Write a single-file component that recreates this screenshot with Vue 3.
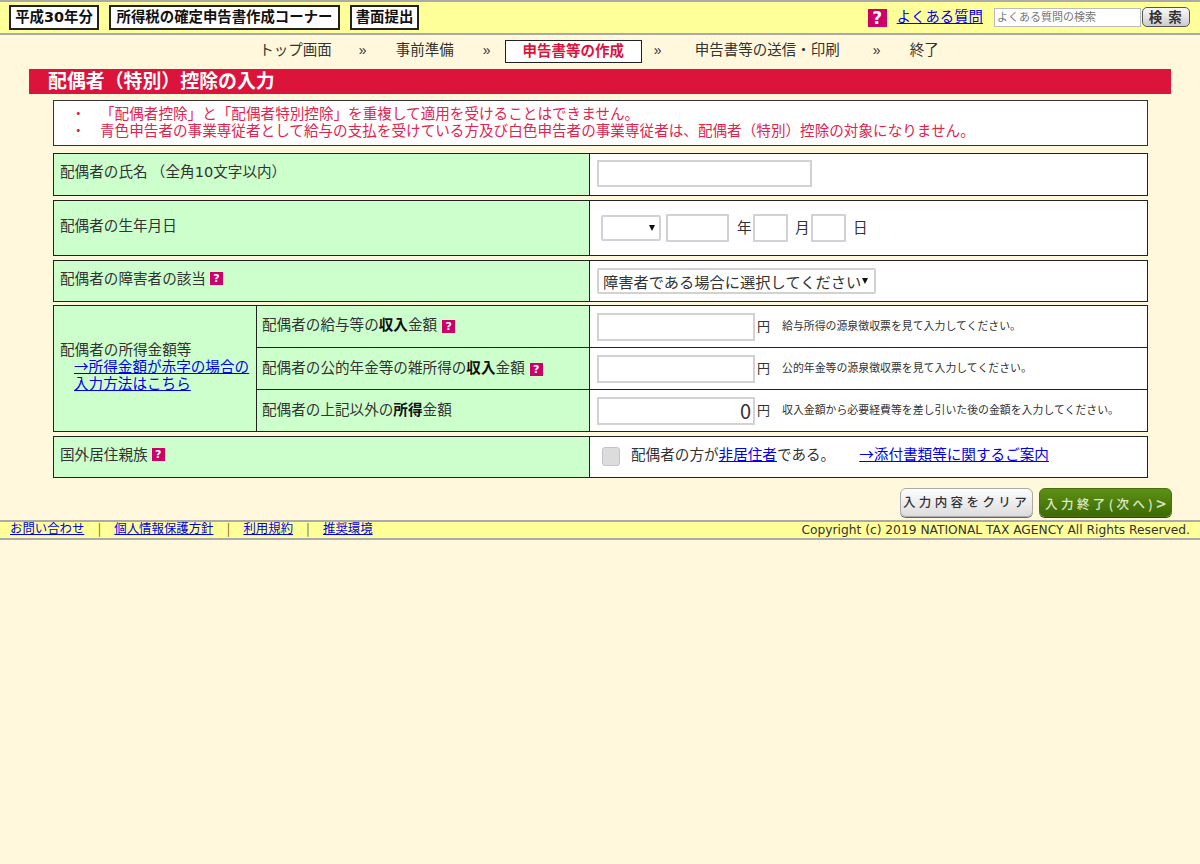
<script setup>
const noteLines = [
  '「配偶者控除」と「配偶者特別控除」を重複して適用を受けることはできません。',
  '青色申告者の事業専従者として給与の支払を受けている方及び白色申告者の事業専従者は、配偶者（特別）控除の対象になりません。'
]
const footerLinks = ['お問い合わせ', '個人情報保護方針', '利用規約', '推奨環境']
</script>

<template>
  <div class="page">
    <header class="top">
      <div class="tags">
        <span class="tag t1">平成<span class="num">30</span>年分</span>
        <span class="tag t2">所得税の確定申告書作成コーナー</span>
        <span class="tag t3">書面提出</span>
      </div>
      <div class="help">
        <span class="q q-big">?</span>
        <a class="faq" href="#">よくある質問</a>
        <input class="search" placeholder="よくある質問の検索" />
        <button class="search-btn">検 索</button>
      </div>
    </header>

    <nav class="steps">
      <span class="step s1">トップ画面</span>
      <span class="sep s2">»</span>
      <span class="step s3">事前準備</span>
      <span class="sep s4">»</span>
      <span class="step active">申告書等の作成</span>
      <span class="sep s5">»</span>
      <span class="step s6">申告書等の送信・印刷</span>
      <span class="sep s7">»</span>
      <span class="step s8">終了</span>
    </nav>

    <h1 class="title">配偶者（特別）控除の入力</h1>

    <main class="content">
      <ul class="notice">
        <li v-for="line in noteLines" :key="line"><span class="dot">・</span><span>{{ line }}</span></li>
      </ul>

      <section class="row h-name">
        <div class="label"><span>配偶者の氏名 （全角<span class="num">10</span>文字以内）</span></div>
        <div class="field"><input class="box name-input" /></div>
      </section>

      <section class="row h-birth">
        <div class="label">配偶者の生年月日</div>
        <div class="field birth">
          <div class="era"><span class="arrow"></span></div>
          <input class="box year" />
          <span class="unit u-year">年</span>
          <input class="box md" />
          <span class="unit u-month">月</span>
          <input class="box md" />
          <span class="unit u-day">日</span>
        </div>
      </section>

      <section class="row h-dis">
        <div class="label">配偶者の障害者の該当<span class="q q-small">?</span></div>
        <div class="field">
          <div class="dis-select">障害者である場合に選択してください<span class="arrow"></span></div>
        </div>
      </section>

      <section class="row income">
        <div class="income-head">
          <div>配偶者の所得金額等</div>
          <a href="#" class="red-link">→所得金額が赤字の場合の入力方法はこちら</a>
        </div>
        <div class="income-rows">
          <div class="irow">
            <div class="ilabel first">配偶者の給与等の<b>収入</b>金額<span class="q q-small">?</span></div>
            <div class="ifield">
              <input class="box money" /><span class="yen">円</span>
              <span class="hint">給与所得の源泉徴収票を見て入力してください。</span>
            </div>
          </div>
          <div class="irow">
            <div class="ilabel">配偶者の公的年金等の雑所得の<b>収入</b>金額<span class="q q-small">?</span></div>
            <div class="ifield">
              <input class="box money" /><span class="yen">円</span>
              <span class="hint">公的年金等の源泉徴収票を見て入力してください。</span>
            </div>
          </div>
          <div class="irow">
            <div class="ilabel">配偶者の上記以外の<b>所得</b>金額</div>
            <div class="ifield">
              <input class="box money" value="0" /><span class="yen">円</span>
              <span class="hint">収入金額から必要経費等を差し引いた後の金額を入力してください。</span>
            </div>
          </div>
        </div>
      </section>

      <section class="row h-dis">
        <div class="label">国外居住親族<span class="q q-small">?</span></div>
        <div class="field abroad">
          <span class="check"></span>
          <span>配偶者の方が<a href="#">非居住者</a>である。</span>
          <a href="#" class="doc-link">→添付書類等に関するご案内</a>
        </div>
      </section>
    </main>

    <div class="actions">
      <button class="act clear">入力内容をクリア</button>
      <button class="act next">入力終了(次へ)<span class="gt">&gt;</span></button>
    </div>

    <footer class="foot">
      <div class="foot-links">
        <template v-for="(l, i) in footerLinks" :key="l">
          <a href="#">{{ l }}</a>
          <span v-if="i < footerLinks.length - 1" class="bar">|</span>
        </template>
      </div>
      <div class="copy">Copyright (c) 2019 NATIONAL TAX AGENCY All Rights Reserved.</div>
    </footer>
  </div>
</template>

<style>
html, body { margin: 0; background: #fff8dc; }
</style>

<style scoped>
* { box-sizing: border-box; }
.page {
  min-height: 864px;
  background: #fff8dc;
  color: #333;
  font-family: "Noto Sans CJK JP", "DejaVu Sans", sans-serif;
  font-size: 14.6px;
  line-height: 17px;
}
a { color: #0000ee; }
.num { font-family: "DejaVu Sans", sans-serif; }

.top {
  height: 35px;
  background: #ffff99;
  border-top: 2px solid #aaa;
  border-bottom: 2px solid #aaa;
  display: flex;
  justify-content: space-between;
  padding: 3px 10px 0 9px;
}
.tags { display: flex; gap: 10px; }
.tag {
  height: 25px;
  background: #fff;
  border: 2px solid #222;
  text-align: center;
  font-weight: 700;
  font-size: 14.4px;
  line-height: 17px;
  color: #111;
  white-space: nowrap;
}
.t1 { width: 90px; }
.t2 { width: 231px; }
.t3 { width: 69px; }
.help { display: flex; align-items: flex-start; padding-top: 4px; }
.q {
  display: inline-block;
  background: #cc0066;
  color: #fff;
  font-weight: 700;
  text-align: center;
  font-family: "DejaVu Sans", sans-serif;
}
.q-big { width: 19px; height: 18px; font-size: 17px; line-height: 18px; }
.q-small { width: 13px; height: 13px; font-size: 11px; line-height: 13px; margin-left: 4px; vertical-align: 0; }
.ilabel .q-small { margin-left: 5px; }
.label .q-small { margin-top: 2px; }
.faq { margin-left: 10px; margin-right: 11px; font-size: 14.4px; line-height: 14px; }
.search {
  width: 147px;
  height: 19px;
  margin-top: -1px;
  border: 1px solid #bbb;
  background: #fff;
  padding: 0 2px 3px;
  font: 11px "Noto Sans CJK JP", sans-serif;
}
.search::placeholder { color: #777; }
.search-btn {
  width: 48px;
  height: 20px;
  margin-top: -2px;
  margin-left: 1px;
  padding: 0 0 2px;
  border: 1px solid #555;
  border-radius: 5px;
  background: linear-gradient(#fafafa, #ccc);
  font: 700 13.5px/14px "Noto Sans CJK JP", sans-serif;
  letter-spacing: 1.5px;
  color: #333;
}

.steps {
  height: 34px;
  display: flex;
  justify-content: center;
  align-items: flex-start;
  padding: 5px 2px 0 0;
  white-space: nowrap;
  font-size: 14.5px;
  line-height: 17px;
}
.step { display: block; }
.sep { display: block; width: 8px; color: #333; font-size: 14px; line-height: 21px; font-family: "Liberation Sans", sans-serif; }
.s1 { margin-right: 27px; }
.s2 { margin-right: 29px; }
.s3 { margin-right: 29px; }
.s4 { margin-right: 14px; }
.s5 { margin-left: 12px; margin-right: 33px; }
.s7 { margin-left: 33px; margin-right: 29px; }
.active {
  width: 137px;
  height: 23px;
  border: 1px solid #222;
  background: #fff;
  color: #dc143c;
  font-weight: 700;
  text-align: center;
}

.title {
  margin: 0 29px;
  height: 25px;
  padding-left: 19px;
  background: #dc143c;
  color: #fff;
  font-size: 18.9px;
  font-weight: 700;
  line-height: 21px;
}

.content {
  margin: 6px 52px 0 53px;
  display: flex;
  flex-direction: column;
  gap: 4px;
}
.notice {
  margin: 0 0 3px;
  height: 46px;
  list-style: none;
  padding: 3px 0 0 17px;
  background: #fff;
  border: 1px solid #333;
  color: #e0244f;
}
.notice li { display: flex; }
.dot { width: 29px; }

.row {
  display: grid;
  grid-template-columns: 536px 1fr;
  border: 1px solid #222;
  background: #fff;
}
.h-name { height: 43px; }
.h-birth { height: 56px; }
.h-dis { height: 42px; }
.label {
  background: #ccffcc;
  border-right: 1px solid #222;
  padding: 0 0 7px 6px;
  display: flex;
  align-items: center;
  white-space: pre;
}
.h-dis .label { padding-bottom: 8px; }
.field { display: flex; align-items: center; padding-left: 7px; }

.box {
  border: 2px solid #d2d2d2;
  background: #fff;
  display: block;
  padding: 0 2px;
  outline: none;
}
.name-input { width: 215px; height: 27px; margin-top: -1px; margin-bottom: 1px; }

.birth { padding-left: 11px; padding-bottom: 1px; }
.era {
  position: relative;
  width: 60px;
  height: 26px;
  border: 2px solid #d2d2d2;
  border-radius: 2px;
  background: #fff;
}
.arrow {
  position: absolute;
  right: 4px;
  top: 8px;
  width: 0;
  height: 0;
  border-left: 3px solid transparent;
  border-right: 3px solid transparent;
  border-top: 6px solid #111;
}
.year { width: 63px; height: 28px; margin-left: 5px; }
.md { width: 35px; height: 28px; }
.unit { display: block; width: 14px; margin-bottom: 2px; }
.u-year { margin-left: 8px; margin-right: 2px; }
.u-month { margin-left: 7px; margin-right: 2px; }
.u-day { margin-left: 7px; }

.dis-select {
  position: relative;
  width: 279px;
  height: 26px;
  border: 2px solid #d2d2d2;
  border-radius: 2px;
  background: #fff;
  font-size: 15.25px;
  line-height: 23px;
  padding-left: 4px;
  white-space: nowrap;
  overflow: hidden;
}
.dis-select .arrow { right: 6px; }

.income { grid-template-columns: 203px 1fr; height: 127px; margin-top: -1px; }
.income-head {
  background: #ccffcc;
  border-right: 1px solid #222;
  padding: 34px 0 0 6px;
}
.red-link { display: block; margin-left: 14px; width: 180px; }
.income-rows { display: grid; grid-template-rows: 41px 42px 42px; }
.irow {
  display: grid;
  grid-template-columns: 333px 1fr;
  border-top: 1px solid #222;
}
.irow:first-child { border-top: 0; }
.ilabel {
  background: #ccffcc;
  border-right: 1px solid #222;
  padding: 10px 0 0 5px;
  white-space: nowrap;
}
.ilabel.first { padding-top: 9px; }
.ilabel b { color: #111; }
.ifield { display: flex; align-items: center; padding-left: 7px; }
.money { width: 158px; height: 28px; text-align: right; font-size: 20px; color: #333; font-family: "Noto Sans CJK JP", sans-serif; }
.yen { margin-left: 2px; margin-bottom: 2px; font-size: 13px; }
.hint { margin-left: 12px; margin-bottom: 2px; font-size: 10.9px; white-space: nowrap; }

.abroad { padding-left: 12px; padding-bottom: 8px; }
.check {
  display: block;
  width: 18px;
  height: 19px;
  margin-right: 11px;
  margin-top: 6px;
  border-radius: 3px;
  border: 1px solid #c4c4c4;
  background: #dcdcdc;
}
.doc-link { margin-left: 24px; }

.actions {
  display: flex;
  justify-content: flex-end;
  gap: 6px;
  margin: 10px 28px 0 0;
}
.act {
  width: 133px;
  height: 29px;
  padding: 0;
  border-radius: 6px;
  font: 500 12.5px/1 "Noto Sans CJK JP", sans-serif;
  letter-spacing: 3.4px;
  white-space: nowrap;
}
.clear {
  border: 1px solid #aaa;
  background: linear-gradient(#fdfdfd, #ddd);
  color: #333;
  box-shadow: 0 1px 0 #666;
}
.next {
  border: 1px solid #4a7010;
  background: linear-gradient(#5d9114, #3d6a05);
  color: #dfe8c8;
  box-shadow: 0 1px 0 #2c4a04;
}
.gt { font-size: 17px; letter-spacing: 0; vertical-align: -1px; }

.foot {
  height: 20px;
  margin-top: 3px;
  background: #ffff99;
  border-top: 2px solid #aaa;
  border-bottom: 2px solid #aaa;
  display: flex;
  justify-content: space-between;
  align-items: center;
  padding: 0 10px 3px;
  font-size: 12.4px;
  line-height: 13px;
}
.foot-links { display: flex; }
.bar { width: 30px; text-align: center; color: #885500; }
.copy { margin-top: 4px; font-family: "DejaVu Sans", sans-serif; font-size: 12.25px; color: #333; white-space: nowrap; }
</style>
